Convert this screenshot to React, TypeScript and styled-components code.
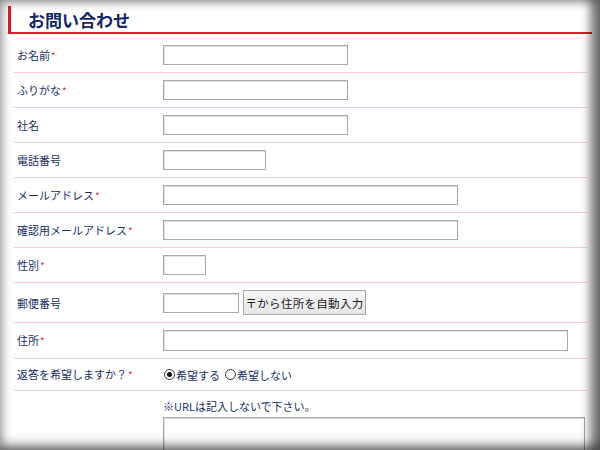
import React from "react";
import styled, { createGlobalStyle } from "styled-components";

const Global = createGlobalStyle`
  html, body { margin: 0; padding: 0; background: #fff; }
  body {
    font-family: "Noto Sans CJK JP", "Noto Sans", sans-serif;
    width: 600px; height: 450px; overflow: hidden;
  }
`;

const Vignette = styled.div`
  position: fixed;
  inset: 0;
  pointer-events: none;
  box-shadow:
    inset 0 0 10px 3px rgba(0, 0, 0, 0.33),
    inset -13px 0 8px -2px rgba(0, 0, 0, 0.42),
    inset 0 -10px 12px -4px rgba(0, 0, 0, 0.3);
`;

const Page = styled.div`
  padding: 6px 8px 0 8px;
`;

const Heading = styled.h2`
  margin: 0 0 4px 0;
  height: 26px;
  display: flex;
  align-items: center;
  padding-left: 17px;
  border-left: 3px solid #d71f26;
  border-bottom: 2px solid #d71f26;
  font-size: 17px;
  font-weight: 700;
  color: #132666;
  line-height: 1;
`;

const List = styled.div`
  margin: 0 5px;
`;

const Row = styled.div`
  display: grid;
  grid-template-columns: 150px 1fr;
  align-items: center;
  padding: 7px 0;
  border-bottom: 1px solid #fbcdcd;
`;

const Label = styled.div`
  padding-left: 4px;
  font-size: 11px;
  color: #1a2f66;
  line-height: 16px;
`;

const Req = styled.span`
  color: #e0303a;
  font-size: 10px;
  margin-left: 1px;
`;

const Field = styled.div`
  display: flex;
  align-items: center;
  gap: 4px;
`;

const TextInput = styled.input<{ $w: number; $h?: number }>`
  box-sizing: border-box;
  width: ${(p) => p.$w}px;
  height: ${(p) => p.$h ?? 20}px;
  border: 1px solid #a7a7a7;
  box-shadow: inset 1px 1px 0 #e2e2e2;
  background: #fff;
  padding: 0 3px;
  margin: 0;
  outline: none;
`;

const Button = styled.button`
  box-sizing: border-box;
  height: 25px;
  width: 123px;
  padding: 0;
  border: 1px solid #a8a8a8;
  background: linear-gradient(#f5f5f5, #e6e6e6);
  font-family: "Noto Sans CJK JP", sans-serif;
  font-size: 11.5px;
  color: #222;
  letter-spacing: 0.3px;
`;

const RadioGroup = styled.div`
  display: flex;
  align-items: center;
  height: 16px;
  font-size: 11px;
  color: #1a2f66;
  line-height: 16px;
`;

const RadioLabel = styled.label`
  display: inline-flex;
  align-items: center;
  margin-right: 4px;
`;

const Radio = styled.input`
  appearance: none;
  box-sizing: border-box;
  width: 11px;
  height: 11px;
  margin: 0 1px 0 1px;
  border: 1px solid #333;
  border-radius: 50%;
  background: #fff;
  position: relative;
  &:checked::after {
    content: "";
    position: absolute;
    left: 2px;
    top: 2px;
    width: 5px;
    height: 5px;
    border-radius: 50%;
    background: #111;
  }
`;

const NoteCell = styled.div`
  display: flex;
  flex-direction: column;
  gap: 3px;
`;

const Note = styled.div`
  font-size: 11px;
  color: #1a2f66;
  line-height: 16px;
`;

const TextArea = styled.textarea`
  box-sizing: border-box;
  width: 422px;
  height: 80px;
  border: 1px solid #a7a7a7;
  box-shadow: inset 1px 1px 0 #e2e2e2;
  resize: none;
  margin: 0;
`;

type F = { label: string; req?: boolean; w: number };

const fields: F[] = [
  { label: "お名前", req: true, w: 185 },
  { label: "ふりがな", req: true, w: 185 },
  { label: "社名", w: 185 },
  { label: "電話番号", w: 103 },
  { label: "メールアドレス", req: true, w: 295 },
  { label: "確認用メールアドレス", req: true, w: 295 },
  { label: "性別", req: true, w: 43 },
];

export default function App() {
  return (
    <>
      <Global />
      <Page>
        <Heading>お問い合わせ</Heading>
        <List>
          {fields.map((f) => (
            <Row key={f.label}>
              <Label>
                {f.label}
                {f.req && <Req>*</Req>}
              </Label>
              <Field>
                <TextInput $w={f.w} />
              </Field>
            </Row>
          ))}
          <Row>
            <Label>郵便番号</Label>
            <Field>
              <TextInput $w={76} />
              <Button type="button">〒から住所を自動入力</Button>
            </Field>
          </Row>
          <Row>
            <Label>
              住所<Req>*</Req>
            </Label>
            <Field>
              <TextInput $w={405} $h={21} />
            </Field>
          </Row>
          <Row>
            <Label>
              返答を希望しますか？<Req>*</Req>
            </Label>
            <RadioGroup>
              <RadioLabel>
                <Radio type="radio" name="reply" defaultChecked />
                希望する
              </RadioLabel>
              <RadioLabel>
                <Radio type="radio" name="reply" />
                希望しない
              </RadioLabel>
            </RadioGroup>
          </Row>
          <Row>
            <div />
            <NoteCell>
              <Note>※URLは記入しないで下さい。</Note>
              <TextArea />
            </NoteCell>
          </Row>
        </List>
      </Page>
      <Vignette />
    </>
  );
}
